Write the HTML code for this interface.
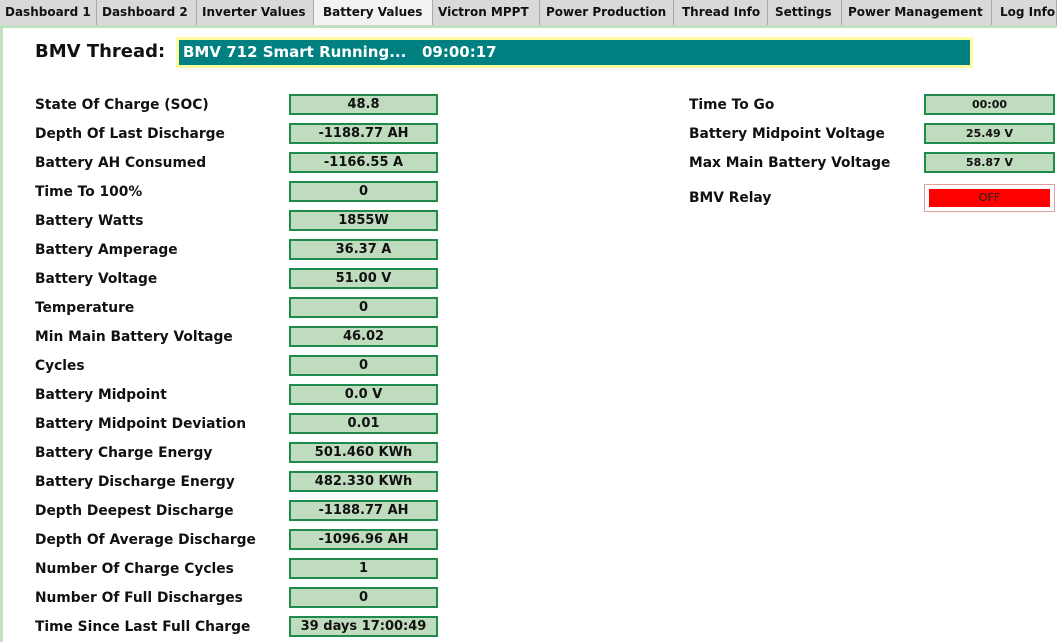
<!DOCTYPE html>
<html><head><meta charset="utf-8"><style>
*{margin:0;padding:0;box-sizing:border-box}
body{width:1057px;height:642px;overflow:hidden;background:#fff;font-family:"DejaVu Sans","Liberation Sans",sans-serif;font-weight:bold;color:#111;position:relative}
.tabs{position:absolute;left:0;top:0;height:25px;width:1057px;background:#d6d6d6;border-bottom:1px solid #aaa}
.tab{position:absolute;top:0;height:25px;border-right:1px solid #aaa;font-size:12px;line-height:24px;padding-left:5px;background:#d9d9d9;white-space:nowrap;overflow:hidden}
.tab.act{background:#f2f2f2;height:27px}
.gl{position:absolute;left:0;top:25px;width:1057px;height:3px;background:#c2dfc2}
.lb{position:absolute;left:0;top:28px;width:3px;height:614px;background:#c2dfc2}
.l{position:absolute;font-size:13.8px;white-space:nowrap;margin-top:1px}
.b{position:absolute;width:149px;height:21px;border:2px solid #1f8a4c;background:#c0dcbe;text-align:center;font-size:13px;line-height:17px}
.b2{position:absolute;left:924px;width:131px;height:21px;border:2px solid #1f8a4c;background:#c0dcbe;text-align:center;font-size:11px;line-height:17px}
</style></head><body>
<div class="tabs">
<div class="tab" style="left:0;width:97px">Dashboard 1</div>
<div class="tab" style="left:97px;width:100px">Dashboard 2</div>
<div class="tab" style="left:197px;width:117px">Inverter Values</div>
<div class="tab act" style="left:314px;width:119px;padding-left:9px">Battery Values</div>
<div class="tab" style="left:433px;width:107px">Victron MPPT</div>
<div class="tab" style="left:540px;width:134px;padding-left:6px">Power Production</div>
<div class="tab" style="left:674px;width:94px;padding-left:8px">Thread Info</div>
<div class="tab" style="left:768px;width:74px;padding-left:7px">Settings</div>
<div class="tab" style="left:842px;width:150px;padding-left:6px">Power Management</div>
<div class="tab" style="left:992px;width:65px;padding-left:8px">Log Info</div>
</div>
<div class="gl"></div><div class="lb"></div>
<div class="l" style="left:35px;top:40px;font-size:18px">BMV Thread:</div>
<div style="position:absolute;left:176px;top:37px;width:797px;height:31px;background:#fffca0;padding:3px">
<div style="background:#008080;height:25px;color:#fff;font-size:15px;line-height:25px;padding-left:4px;white-space:pre">BMV 712 Smart Running...   09:00:17</div></div>

<div class="l" style="left:35px;top:96px">State Of Charge (SOC)</div><div class="b" style="left:289px;top:94px">48.8</div>
<div class="l" style="left:35px;top:125px">Depth Of Last Discharge</div><div class="b" style="left:289px;top:123px">-1188.77 AH</div>
<div class="l" style="left:35px;top:154px">Battery AH Consumed</div><div class="b" style="left:289px;top:152px">-1166.55 A</div>
<div class="l" style="left:35px;top:183px">Time To 100%</div><div class="b" style="left:289px;top:181px">0</div>
<div class="l" style="left:35px;top:212px">Battery Watts</div><div class="b" style="left:289px;top:210px">1855W</div>
<div class="l" style="left:35px;top:241px">Battery Amperage</div><div class="b" style="left:289px;top:239px">36.37 A</div>
<div class="l" style="left:35px;top:270px">Battery Voltage</div><div class="b" style="left:289px;top:268px">51.00 V</div>
<div class="l" style="left:35px;top:299px">Temperature</div><div class="b" style="left:289px;top:297px">0</div>
<div class="l" style="left:35px;top:328px">Min Main Battery Voltage</div><div class="b" style="left:289px;top:326px">46.02</div>
<div class="l" style="left:35px;top:357px">Cycles</div><div class="b" style="left:289px;top:355px">0</div>
<div class="l" style="left:35px;top:386px">Battery Midpoint</div><div class="b" style="left:289px;top:384px">0.0 V</div>
<div class="l" style="left:35px;top:415px">Battery Midpoint Deviation</div><div class="b" style="left:289px;top:413px">0.01</div>
<div class="l" style="left:35px;top:444px">Battery Charge Energy</div><div class="b" style="left:289px;top:442px">501.460 KWh</div>
<div class="l" style="left:35px;top:473px">Battery Discharge Energy</div><div class="b" style="left:289px;top:471px">482.330 KWh</div>
<div class="l" style="left:35px;top:502px">Depth Deepest Discharge</div><div class="b" style="left:289px;top:500px">-1188.77 AH</div>
<div class="l" style="left:35px;top:531px">Depth Of Average Discharge</div><div class="b" style="left:289px;top:529px">-1096.96 AH</div>
<div class="l" style="left:35px;top:560px">Number Of Charge Cycles</div><div class="b" style="left:289px;top:558px">1</div>
<div class="l" style="left:35px;top:589px">Number Of Full Discharges</div><div class="b" style="left:289px;top:587px">0</div>
<div class="l" style="left:35px;top:618px">Time Since Last Full Charge</div><div class="b" style="left:289px;top:616px">39 days 17:00:49</div>

<div class="l" style="left:689px;top:96px">Time To Go</div><div class="b2" style="top:94px">00:00</div>
<div class="l" style="left:689px;top:125px">Battery Midpoint Voltage</div><div class="b2" style="top:123px">25.49 V</div>
<div class="l" style="left:689px;top:154px">Max Main Battery Voltage</div><div class="b2" style="top:152px">58.87 V</div>
<div class="l" style="left:689px;top:189px">BMV Relay</div>
<div style="position:absolute;left:924px;top:184px;width:131px;height:28px;border:1px solid #e0a0a0;padding:4px">
<div style="background:#ff0000;height:18px;font-size:11px;font-weight:normal;line-height:18px;text-align:center;color:#222">OFF</div></div>
</body></html>
